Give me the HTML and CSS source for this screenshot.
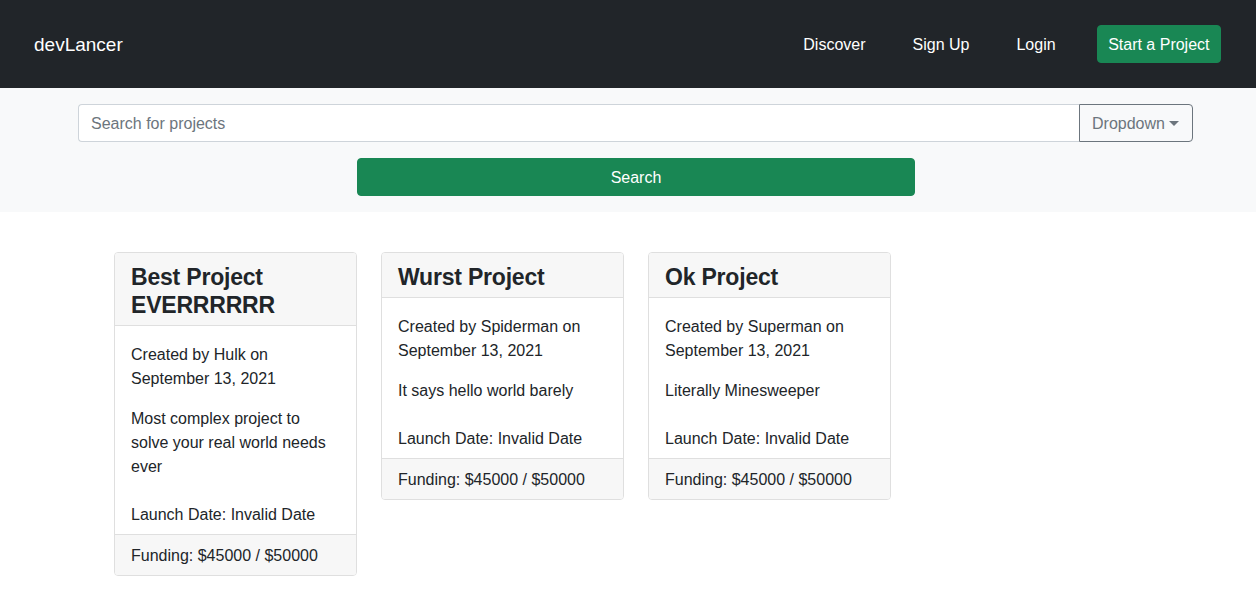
FILE: index.html
```html
<!DOCTYPE html>
<html lang="en">
<head>
<meta charset="utf-8">
<title>devLancer</title>
<link rel="stylesheet" href="styles.css">
</head>
<body>
<nav class="navbar">
  <a class="brand" href="#">devLancer</a>
  <div class="nav-right">
    <ul class="nav-links">
      <li><a href="#">Discover</a></li>
      <li><a href="#">Sign Up</a></li>
      <li><a href="#">Login</a></li>
    </ul>
    <a class="btn btn-success btn-nav" href="#">Start a Project</a>
  </div>
</nav>

<section class="search-bar">
  <div class="input-group">
    <input class="search-input" type="text" placeholder="Search for projects">
    <button class="btn-dropdown" type="button">Dropdown<span class="caret"></span></button>
  </div>
  <button class="btn btn-success btn-search" type="button">Search</button>
</section>

<main class="cards">
  <div class="card">
    <div class="card-header"><h4>Best Project EVERRRRRR</h4></div>
    <div class="card-body">
      <p class="created">Created by Hulk on September 13, 2021</p>
      <p class="desc">Most complex project to solve your real world needs ever</p>
      <p class="launch">Launch Date: Invalid Date</p>
    </div>
    <div class="card-footer">Funding: $45000 / $50000</div>
  </div>
  <div class="card">
    <div class="card-header"><h4>Wurst Project</h4></div>
    <div class="card-body">
      <p class="created">Created by Spiderman on September 13, 2021</p>
      <p class="desc">It says hello world barely</p>
      <p class="launch">Launch Date: Invalid Date</p>
    </div>
    <div class="card-footer">Funding: $45000 / $50000</div>
  </div>
  <div class="card">
    <div class="card-header"><h4>Ok Project</h4></div>
    <div class="card-body">
      <p class="created">Created by Superman on September 13, 2021</p>
      <p class="desc">Literally Minesweeper</p>
      <p class="launch">Launch Date: Invalid Date</p>
    </div>
    <div class="card-footer">Funding: $45000 / $50000</div>
  </div>
</main>
</body>
</html>
```

FILE: styles.css
```css
* { box-sizing: border-box; }

html, body {
  margin: 0;
  padding: 0;
  background: #fff;
  color: #212529;
  font-family: "Liberation Sans", Arial, sans-serif;
  font-size: 16px;
  line-height: 24px;
}

a { text-decoration: none; }

/* Navbar */
.navbar {
  height: 88px;
  background: #212529;
  display: flex;
  align-items: center;
  justify-content: space-between;
  padding: 1px 35px 0 34px;
}

.brand {
  color: #fff;
  font-size: 19px;
  line-height: 30px;
  padding-top: 1px;
}

.nav-right {
  display: flex;
  align-items: center;
  gap: 41px;
}

.nav-links {
  list-style: none;
  margin: 0;
  padding: 1px 0 0;
  display: flex;
  gap: 47px;
}

.nav-links a {
  color: #fff;
  font-size: 16px;
}

.btn {
  display: inline-block;
  font-family: inherit;
  font-size: 16px;
  line-height: 24px;
  height: 38px;
  padding: 7px 12px 5px;
  border: 1px solid transparent;
  border-radius: 4px;
  text-align: center;
  cursor: pointer;
}

.btn-nav {
  padding-left: 10.5px;
  padding-right: 10.5px;
  margin-top: -1px;
}

.btn-success {
  background: #198754;
  border-color: #198754;
  color: #fff;
}

/* Search area */
.search-bar {
  background: #f8f9fa;
  padding: 16px 0;
}

.input-group {
  display: flex;
  margin-left: 78px;
  width: 1115px;
  height: 38px;
}

.search-input {
  flex: 1;
  min-width: 0;
  height: 38px;
  font-family: inherit;
  font-size: 16px;
  padding: 7px 12px 5px;
  border: 1px solid #ced4da;
  border-right: none;
  border-radius: 4px 0 0 4px;
  background: #fff;
  color: #212529;
  outline: none;
}

.search-input::placeholder { color: #6c757d; }

.btn-dropdown {
  width: 114px;
  height: 38px;
  font-family: inherit;
  font-size: 16px;
  color: #6c757d;
  background: transparent;
  border: 1px solid #6c757d;
  border-radius: 0 4px 4px 0;
  padding: 7px 12px 5px;
  display: flex;
  align-items: center;
  white-space: nowrap;
}

.caret {
  display: inline-block;
  margin-left: 4px;
  margin-top: -2px;
  border-top: 5px solid #6c757d;
  border-left: 5px solid transparent;
  border-right: 5px solid transparent;
}

.btn-search {
  display: block;
  margin: 16px 0 0 357px;
  width: 558px;
}

/* Cards */
.cards {
  display: flex;
  align-items: flex-start;
  gap: 24px;
  padding: 40px 0 0 114px;
}

.card {
  width: 243px;
  border: 1px solid #dfdfdf;
  border-radius: 4px;
  overflow: hidden;
  background: #fff;
}

.card-header {
  background: #f7f7f7;
  border-bottom: 1px solid #dfdfdf;
  padding: 10px 16px 6px;
}

.card-header h4 {
  margin: 0;
  font-size: 23px;
  line-height: 28px;
  font-weight: 700;
  letter-spacing: -0.2px;
}

.card-body {
  padding: 17px 16px 7px;
}

.card-body p { margin: 0; }

.card-body .created { margin-bottom: 16px; }
.card-body .desc { margin-bottom: 24px; }

.card-footer {
  background: #f7f7f7;
  border-top: 1px solid #dfdfdf;
  padding: 9px 16px 7px;
}
```
